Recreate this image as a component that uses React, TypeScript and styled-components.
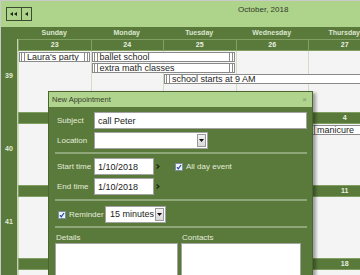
import React from 'react';
import styled, { createGlobalStyle } from 'styled-components';

const GlobalStyle = createGlobalStyle`
  html, body {
    margin: 0;
    padding: 0;
    background: #ffffff;
    overflow: hidden;
  }
  body {
    font-family: "Liberation Sans", Arial, sans-serif;
  }
`;

type CalEvent = { title: string; col: number; span: number; lane: number };

const dayNames = ['Sunday', 'Monday', 'Tuesday', 'Wednesday', 'Thursday', 'Friday', 'Saturday'];

const weeks: { number: number; days: number[]; events: CalEvent[] }[] = [
  {
    number: 39,
    days: [23, 24, 25, 26, 27, 28, 29],
    events: [
      { title: "Laura's party", col: 0, span: 1, lane: 0 },
      { title: 'ballet school', col: 1, span: 2, lane: 0 },
      { title: 'extra math classes', col: 1, span: 2, lane: 1 },
      { title: 'school starts at 9 AM', col: 2, span: 5, lane: 2 },
    ],
  },
  {
    number: 40,
    days: [30, 1, 2, 3, 4, 5, 6],
    events: [{ title: 'manicure', col: 4, span: 3, lane: 0 }],
  },
  { number: 41, days: [7, 8, 9, 10, 11, 12, 13], events: [] },
  { number: 42, days: [14, 15, 16, 17, 18, 19, 20], events: [] },
];

const Frame = styled.div`
  position: relative;
  width: 360px;
  height: 275px;
  overflow: hidden;
  box-sizing: border-box;
  border-top: 1px solid #c9c9c9;
  border-left: 1px solid #c9c9c9;
`;

const Calendar = styled.div`
  width: 524.5px;
`;

const Header = styled.div`
  display: grid;
  grid-template-columns: 1fr auto 1fr;
  height: 26px;
  background: #aed38b;
`;

const Nav = styled.div`
  display: flex;
  margin: 6px 0 0 5px;
`;

const NavButton = styled.div<{ $w: number; $first?: boolean }>`
  width: ${(p) => p.$w}px;
  height: 14px;
  box-sizing: border-box;
  border: 1px solid #3d4c31;
  border-left-width: ${(p) => (p.$first ? 1 : 0)}px;
  display: flex;
  align-items: center;
  justify-content: center;
`;

const Title = styled.div`
  font-size: 8px;
  line-height: 10px;
  padding-top: 4px;
  color: #333a2c;
`;

const DayNameRow = styled.div`
  display: grid;
  grid-template-columns: 17px repeat(7, 72.5px);
  height: 12px;
  background: #5a7a3b;
`;

const DayName = styled.div`
  font-size: 7px;
  font-weight: bold;
  line-height: 12px;
  text-align: center;
  color: #dbe6cf;
`;

const Week = styled.div`
  display: grid;
  grid-template-columns: 17px repeat(7, 72.5px);
  grid-template-rows: 12px repeat(3, 11px) 28px;
`;

const WeekNumber = styled.div`
  grid-column: 1;
  grid-row: 1 / -1;
  background: #5a7a3b;
  border-right: 1px solid #c2d3b1;
  display: flex;
  align-items: center;
  justify-content: center;
  font-size: 7px;
  font-weight: bold;
  color: #e3ebd9;
`;

const DayBand = styled.div<{ $col: number }>`
  grid-column: ${(p) => p.$col};
  grid-row: 1;
  background: #5a7a3b;
  box-sizing: border-box;
  border: 1px solid #819f63;
  border-right: none;
  font-size: 7px;
  font-weight: bold;
  line-height: 10px;
  text-align: center;
  color: #e9f0e2;
`;

const DayCell = styled.div<{ $col: number }>`
  grid-column: ${(p) => p.$col};
  grid-row: 2 / -1;
  background: #f4f4f4;
  border-left: 1px solid #d2dfc6;
`;

const EventBar = styled.div<{ $col: number; $span: number; $lane: number }>`
  grid-column: ${(p) => p.$col} / span ${(p) => p.$span};
  grid-row: ${(p) => p.$lane + 2};
  margin: 1px 1px 0 1px;
  height: 10px;
  box-sizing: border-box;
  background: #ffffff;
  border: 1px solid #8a8a8a;
  display: flex;
  align-items: stretch;
  overflow: hidden;
  white-space: nowrap;
`;

const Grip = styled.span`
  flex: none;
  width: 2px;
  margin: 0 1px;
  border-left: 1px solid #8a8a8a;
  border-right: 1px solid #8a8a8a;
`;

const EventText = styled.span`
  flex: 1;
  font-size: 9px;
  line-height: 9px;
  color: #1e1e1e;
  padding-left: 1px;
  overflow: hidden;
`;

const Dialog = styled.div`
  position: absolute;
  left: 47px;
  top: 90px;
  width: 265px;
  height: 200px;
  box-sizing: border-box;
  border: 1px solid #4a6530;
  box-shadow: 3px 2px 3px rgba(0, 0, 0, 0.35);
  background: #5a7a3b;
`;

const TitleBar = styled.div`
  height: 15px;
  background: #b0d48d;
  display: flex;
  align-items: center;
  justify-content: space-between;
  padding: 0 5px 0 3px;
  font-size: 7.5px;
  color: #363d2e;
`;

const Close = styled.span`
  font-size: 8px;
  color: #7d9170;
`;

const Body = styled.div`
  padding: 5px 5px 0 6px;
`;

const Row = styled.div<{ $mt?: number }>`
  display: flex;
  align-items: center;
  height: 17px;
  margin-top: ${(p) => p.$mt ?? 0}px;
`;

const Label = styled.span`
  flex: none;
  box-sizing: border-box;
  width: 39px;
  padding-left: 2px;
  font-size: 8px;
  white-space: nowrap;
  color: #e4ebda;
`;

const TextInput = styled.input<{ $w?: number }>`
  width: ${(p) => (p.$w ? `${p.$w}px` : 'auto')};
  flex: ${(p) => (p.$w ? 'none' : '1')};
  min-width: 0;
  height: 17px;
  box-sizing: border-box;
  margin: 0;
  padding: 0 3px;
  border: 1px solid #a3a3a3;
  background: #ffffff;
  font-family: "Liberation Sans", Arial, sans-serif;
  font-size: 9px;
  color: #222222;
  outline: none;
`;

const Combo = styled.div<{ $w: number }>`
  width: ${(p) => p.$w}px;
  height: 17px;
  box-sizing: border-box;
  border: 1px solid #a3a3a3;
  background: #ffffff;
  display: flex;
  align-items: stretch;
  flex: none;
`;

const ComboText = styled.span`
  flex: 1;
  overflow: hidden;
  white-space: nowrap;
  padding-left: 4px;
  font-size: 9px;
  line-height: 15px;
  color: #222222;
`;

const DropButton = styled.span`
  flex: none;
  width: 9px;
  margin: 1px;
  box-sizing: border-box;
  border: 1px solid #9a9a9a;
  background: linear-gradient(#f2f2f2, #d8d8d8);
  display: flex;
  align-items: center;
  justify-content: center;
`;

const Separator = styled.div<{ $mt: number; $mb: number }>`
  height: 2px;
  background: #8ea678;
  margin: ${(p) => p.$mt}px 0 ${(p) => p.$mb}px 0;
`;

const Spin = styled.span`
  display: flex;
  margin-left: 2px;
`;

const CheckGroup = styled.span<{ $ml: number }>`
  display: flex;
  align-items: center;
  margin-left: ${(p) => p.$ml}px;
`;

const CheckText = styled.span<{ $w?: number }>`
  margin-left: 3px;
  width: ${(p) => (p.$w ? `${p.$w}px` : 'auto')};
  font-size: 8px;
  color: #e4ebda;
`;

const Panes = styled.div`
  display: grid;
  grid-template-columns: 123px 120px;
  column-gap: 3px;
  margin-top: 5px;
`;

const PaneLabel = styled.div`
  font-size: 8px;
  line-height: 10px;
  padding-left: 1px;
  color: #e4ebda;
`;

const PaneBox = styled.div`
  height: 60px;
  background: #ffffff;
  border: 1px solid #a3a3a3;
`;

const Checkbox = () => (
  <svg width="8" height="8" viewBox="0 0 8 8">
    <rect x="0.5" y="0.5" width="7" height="7" fill="#eef3fa" stroke="#7d8ea2" />
    <path d="M2 4.2 L3.4 5.8 L6 2" fill="none" stroke="#2b4f9e" strokeWidth="1.3" />
  </svg>
);

const DownArrow = () => (
  <svg width="5" height="3" viewBox="0 0 5 3">
    <polygon points="0,0 5,0 2.5,3" fill="#111" />
  </svg>
);

const SpinArrow = () => (
  <Spin>
    <svg width="4" height="5" viewBox="0 0 4 5">
      <path d="M0.6 0.5 L3 2.5 L0.6 4.5" fill="none" stroke="#1c2615" strokeWidth="1.2" />
    </svg>
  </Spin>
);

const App = () => {
  return (
    <Frame>
      <GlobalStyle />
      <Calendar>
        <Header>
          <Nav>
            <NavButton $w={16} $first>
              <svg width="8" height="4" viewBox="0 0 8 4">
                <polygon points="0,2 3,0 3,4" fill="#1c2615" />
                <polygon points="4,2 7,0 7,4" fill="#1c2615" />
              </svg>
            </NavButton>
            <NavButton $w={10}>
              <svg width="3" height="4" viewBox="0 0 3 4">
                <polygon points="0,2 3,0 3,4" fill="#1c2615" />
              </svg>
            </NavButton>
          </Nav>
          <Title>October, 2018</Title>
          <div />
        </Header>
        <DayNameRow>
          <div />
          {dayNames.map((d) => (
            <DayName key={d}>{d}</DayName>
          ))}
        </DayNameRow>
        {weeks.map((w) => (
          <Week key={w.number}>
            <WeekNumber>{w.number}</WeekNumber>
            {w.days.map((d, i) => (
              <DayBand key={`b${i}`} $col={i + 2}>
                {d}
              </DayBand>
            ))}
            {w.days.map((_, i) => (
              <DayCell key={`c${i}`} $col={i + 2} />
            ))}
            {w.events.map((e) => (
              <EventBar key={e.title} $col={e.col + 2} $span={e.span} $lane={e.lane}>
                <Grip />
                <EventText>{e.title}</EventText>
                <Grip />
              </EventBar>
            ))}
          </Week>
        ))}
      </Calendar>

      <Dialog>
        <TitleBar>
          <span>New Appointment</span>
          <Close>×</Close>
        </TitleBar>
        <Body>
          <Row>
            <Label>Subject</Label>
            <TextInput readOnly value="call Peter" />
          </Row>
          <Row $mt={3}>
            <Label>Location</Label>
            <Combo $w={114}>
              <ComboText />
              <DropButton>
                <DownArrow />
              </DropButton>
            </Combo>
          </Row>
          <Separator $mt={3} $mb={4} />
          <Row>
            <Label>Start time</Label>
            <TextInput readOnly value="1/10/2018" $w={60} />
            <SpinArrow />
            <CheckGroup $ml={15}>
              <Checkbox />
              <CheckText>All day event</CheckText>
            </CheckGroup>
          </Row>
          <Row $mt={3}>
            <Label>End time</Label>
            <TextInput readOnly value="1/10/2018" $w={60} />
            <SpinArrow />
          </Row>
          <Separator $mt={4} $mb={5} />
          <Row>
            <CheckGroup $ml={3}>
              <Checkbox />
              <CheckText $w={36}>Reminder</CheckText>
            </CheckGroup>
            <Combo $w={61}>
              <ComboText>15 minutes</ComboText>
              <DropButton>
                <DownArrow />
              </DropButton>
            </Combo>
          </Row>
          <Separator $mt={3} $mb={0} />
          <Panes>
            <PaneLabel>Details</PaneLabel>
            <PaneLabel>Contacts</PaneLabel>
            <PaneBox />
            <PaneBox />
          </Panes>
        </Body>
      </Dialog>
    </Frame>
  );
};

export default App;
